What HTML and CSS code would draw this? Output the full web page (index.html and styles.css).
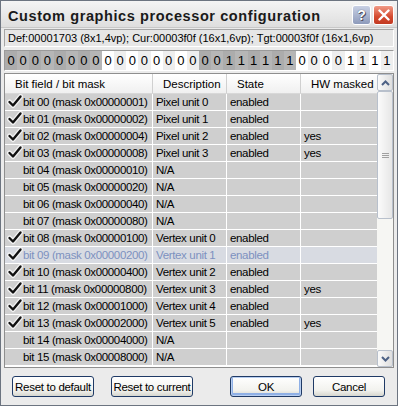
FILE: index.html
```html
<!DOCTYPE html>
<html lang="en">
<head>
    <meta charset="UTF-8">
    <title>Custom graphics processor configuration</title>
    <link rel="stylesheet" href="styles.css">
</head>
<body>

<div class="window">
    <div class="titlebar">
        <span class="title">Custom graphics processor configuration</span>
        <span class="tbtn help">?</span>
        <span class="tbtn close">
            <svg width="12" height="12" viewBox="0 0 12 12"><path d="M1.5 1.5 L10.5 10.5 M10.5 1.5 L1.5 10.5" stroke="#fff" stroke-width="2.4" stroke-linecap="round"/></svg>
        </span>
    </div>

    <div class="content">
        <div class="defline">Def:00001703 (8x1,4vp); Cur:00003f0f (16x1,6vp); Tgt:00003f0f (16x1,6vp)</div>

        <div class="bitstrip" id="bitstrip"></div>

        <div class="list">
            <div class="list-main">
                <div class="row head">
                    <div class="cell c1">Bit field / bit mask</div>
                    <div class="cell c2">Description</div>
                    <div class="cell c3">State</div>
                    <div class="cell c4">HW masked</div>
                </div>
                <div id="rows"></div>
            </div>
            <div class="scrollbar">
                <div class="sbtn">
                    <svg width="9" height="6" viewBox="0 0 9 6"><path d="M1 5 L4.5 1.5 L8 5" fill="none" stroke="#4d6185" stroke-width="2"/></svg>
                </div>
                <div class="track">
                    <div class="thumb"><span class="grip"></span></div>
                </div>
                <div class="sbtn">
                    <svg width="9" height="6" viewBox="0 0 9 6"><path d="M1 1 L4.5 4.5 L8 1" fill="none" stroke="#4d6185" stroke-width="2"/></svg>
                </div>
            </div>
        </div>

        <div class="footer">
            <div class="left-btns">
                <button class="btn">Reset to default</button>
                <button class="btn">Reset to current</button>
            </div>
            <div class="right-btns">
                <button class="btn ok">OK</button>
                <button class="btn">Cancel</button>
            </div>
        </div>
    </div>
</div>

<script>
    // current mask 0x00003f0f, shown from bit 31 down to bit 0
    const cur = 0x00003f0f;
    const strip = document.getElementById("bitstrip");
    for (let i = 31; i >= 0; i--) {
        const cell = document.createElement("span");
        const group = Math.floor((31 - i) / 8);
        cell.className = "bit " + (group % 2 === 0 ? "dark" : "light") + ((31 - i) % 2 ? " alt" : "");
        cell.textContent = (cur >>> i) & 1;
        strip.appendChild(cell);
    }

    const rows = [
        ["Pixel unit 0", "enabled", ""],
        ["Pixel unit 1", "enabled", ""],
        ["Pixel unit 2", "enabled", "yes"],
        ["Pixel unit 3", "enabled", "yes"],
        ["N/A", "", ""],
        ["N/A", "", ""],
        ["N/A", "", ""],
        ["N/A", "", ""],
        ["Vertex unit 0", "enabled", ""],
        ["Vertex unit 1", "enabled", ""],
        ["Vertex unit 2", "enabled", ""],
        ["Vertex unit 3", "enabled", "yes"],
        ["Vertex unit 4", "enabled", ""],
        ["Vertex unit 5", "enabled", "yes"],
        ["N/A", "", ""],
        ["N/A", "", ""]
    ];

    const check = '<svg class="check" width="16" height="15" viewBox="0 0 16 15">' +
        '<path d="M2.5 8 L6 11.5 L13.5 2.5" fill="none" stroke="#f2f2f2" stroke-width="5" stroke-linecap="round" stroke-linejoin="round"/>' +
        '<path d="M2.5 8 L6 11.5 L13.5 2.5" fill="none" stroke="#111" stroke-width="2.4" stroke-linecap="round" stroke-linejoin="round"/></svg>';

    const container = document.getElementById("rows");
    rows.forEach((r, i) => {
        const num = String(i).padStart(2, "0");
        const mask = "0x" + (1 << i).toString(16).padStart(8, "0");
        const row = document.createElement("div");
        row.className = "row" + (i === 9 ? " dim" : "");
        row.innerHTML = `
            <div class="cell c1">${r[1] ? check : ""}<span class="label">bit ${num} (mask ${mask})</span></div>
            <div class="cell c2">${r[0]}</div>
            <div class="cell c3">${r[1]}</div>
            <div class="cell c4">${r[2]}</div>
        `;
        container.appendChild(row);
    });
</script>

</body>
</html>
```

FILE: styles.css
```css
/* General */
body {
    margin: 0;
    font-family: "Liberation Sans", Arial, sans-serif;
    font-size: 11px;
    color: #000;
}

.window {
    width: 398px;
    height: 406px;
    box-sizing: border-box;
    border: 1px solid #6c7480;
    background-color: #ebebeb;
    display: flex;
    flex-direction: column;
}

/* Title bar */
.titlebar {
    height: 26px;
    display: flex;
    align-items: center;
    padding: 0 3px 0 7px;
    background: linear-gradient(#f4f4f4, #dedede);
    border-bottom: 1px solid #c8c8c8;
}

.title {
    flex: 1;
    font-weight: bold;
    font-size: 14.5px;
    letter-spacing: 0.6px;
    padding-top: 3px;
    color: #1a1a1a;
}

.tbtn {
    width: 19px;
    height: 20px;
    box-sizing: border-box;
    border-radius: 3px;
    border: 1px solid #fff;
    display: flex;
    align-items: center;
    justify-content: center;
    margin-left: 2px;
    margin-top: 2px;
}

.help {
    background: linear-gradient(#c8d0e4, #8e9bbb);
    color: #fff;
    font-weight: bold;
    font-size: 14px;
    text-shadow: 0 0 1px #334, 1px 1px 0 #556;
}

.close {
    width: 21px;
    background: linear-gradient(#f09a86, #d4492e 60%, #c23a22);
}

/* Content */
.content {
    flex: 1;
    display: flex;
    flex-direction: column;
    padding: 1px 3px 0 3px;
}

.defline {
    height: 18px;
    box-sizing: border-box;
    border: 1px solid #a5a5a5;
    border-right-color: #fff;
    border-bottom-color: #fff;
    background-color: #e6e6e6;
    padding: 2px 3px;
    font-size: 11px;
    letter-spacing: 0;
    white-space: nowrap;
    overflow: hidden;
}

.bitstrip {
    margin-top: 3px;
    height: 19px;
    display: grid;
    grid-template-columns: repeat(32, 1fr);
    border: 1px solid #9a9a9a;
    border-right-color: #fff;
    border-bottom-color: #fff;
}

.bit {
    display: flex;
    align-items: center;
    justify-content: center;
    font-size: 13px;
}

.bit.dark { background-color: #acacac; }
.bit.dark.alt { background-color: #b6b6b6; }
.bit.light { background-color: #ffffff; }
.bit.light.alt { background-color: #eeeeee; }

/* List */
.list {
    margin-top: 2px;
    height: 295px;
    box-sizing: border-box;
    border: 1px solid #8e8e8e;
    background-color: #fff;
    display: flex;
}

.list-main {
    flex: 1;
}

.row {
    display: flex;
    height: 17px;
    box-sizing: border-box;
    border-bottom: 1px solid #fff;
    background-color: #cfcfcf;
    font-size: 11.5px;
    letter-spacing: -0.35px;
}

.row.head {
    height: 20px;
    background: linear-gradient(#ffffff, #f0f0f0);
    border-bottom: 1px solid #d8d8d8;
    font-size: 11.5px;
    letter-spacing: 0;
}

.cell {
    box-sizing: border-box;
    border-right: 1px solid #fff;
    display: flex;
    align-items: center;
    padding-left: 3px;
    white-space: nowrap;
    overflow: hidden;
}

.head .cell {
    padding-left: 10px;
    border-right: 1px solid #d0d0d0;
}

.head .c4 { border-right: none; }

.c1 { width: 148px; padding-left: 18px; position: relative; }
.c2 { width: 74px; }
.c3 { width: 74px; }
.c4 { flex: 1; border-right: none; }

.check {
    position: absolute;
    left: 2px;
    top: 0;
}

.row.dim {
    background-color: #d8dbe2;
    color: #7d91c0;
}

/* Scrollbar */
.scrollbar {
    width: 16px;
    display: flex;
    flex-direction: column;
    background-color: #f6f6f3;
}

.sbtn {
    height: 17px;
    box-sizing: border-box;
    border: 1px solid #b8c0cc;
    border-radius: 2px;
    background: linear-gradient(90deg, #fafafa, #dedede);
    display: flex;
    align-items: center;
    justify-content: center;
}

.track {
    flex: 1;
}

.thumb {
    height: 128px;
    box-sizing: border-box;
    border: 1px solid #b8c0cc;
    border-radius: 2px;
    background: linear-gradient(90deg, #fbfbfb, #e6e6e6);
    display: flex;
    align-items: center;
    justify-content: center;
}

.grip {
    width: 7px;
    height: 5px;
    background: repeating-linear-gradient(#a0a0a0 0 1px, transparent 1px 2px);
}

/* Footer buttons */
.footer {
    display: flex;
    justify-content: space-between;
    padding: 8px 9px 0 8px;
}

.left-btns, .right-btns {
    display: flex;
    gap: 17px;
}

.right-btns { gap: 11px; }

.btn {
    font-family: "Liberation Sans", Arial, sans-serif;
    font-size: 11.5px;
    letter-spacing: -0.3px;
    white-space: nowrap;
    height: 21px;
    width: 82px;
    padding: 0;
    border: 1px solid #1f3a66;
    border-radius: 3px;
    background: linear-gradient(#ffffff, #f2f2ee 70%, #d6d6ce);
    color: #000;
}

.btn.ok {
    box-shadow: inset 0 0 0 1px #b8cef0, inset 0 -1px 0 2px #8fb0e6;
}

.right-btns .btn { width: 72px; }
```
